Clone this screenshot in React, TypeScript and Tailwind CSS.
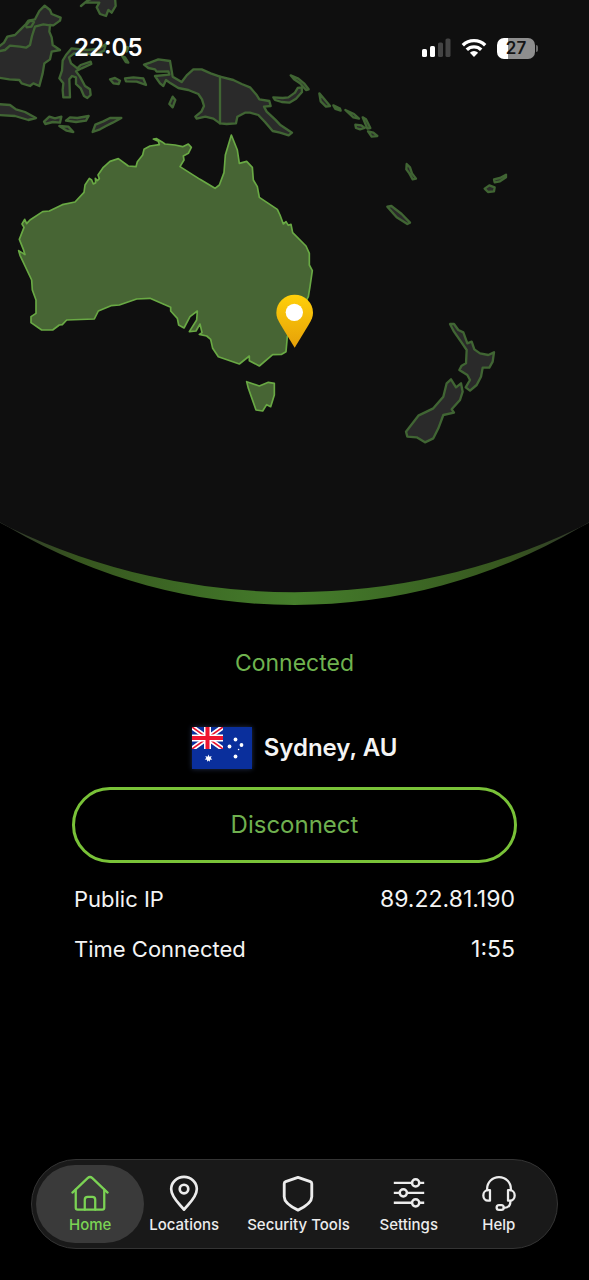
import type { ReactNode } from "react";

function WorldMap() {
    return (
        <svg viewBox="0 0 1767 1860" className="block w-full" aria-hidden="true">
            <defs>
                <linearGradient id="rim" x1="0" x2="1" y1="0" y2="0">
                    <stop offset="0" stopColor="#30352d" />
                    <stop offset="0.13" stopColor="#37551f" />
                    <stop offset="0.32" stopColor="#3d6a25" />
                    <stop offset="0.5" stopColor="#457d2b" />
                    <stop offset="0.68" stopColor="#3d6a25" />
                    <stop offset="0.87" stopColor="#37551f" />
                    <stop offset="1" stopColor="#30352d" />
                </linearGradient>
                <linearGradient id="pin" x1="0" x2="0" y1="0" y2="1">
                    <stop offset="0" stopColor="#ffd00a" />
                    <stop offset="1" stopColor="#e6a008" />
                </linearGradient>
            </defs>

            {/* globe */}
            <path d="M0 0H1767V1568L1737 1584A1692 1692 0 0 1 30 1584L0 1568Z" fill="url(#rim)" />
            <path d="M0 0H1767V1567L1737 1583A1980 1980 0 0 1 30 1583L0 1567Z" fill="#0f0f0f" />

            {/* neighbouring islands */}
            <g fill="#2a2a2a" stroke="#406533" strokeWidth="7" strokeLinejoin="round" strokeLinecap="round">
                {/* Borneo */}
                <path d="M-10 145L12 128L22 110L45 105L62 88L78 72L85 62L105 58L118 33L134 17L150 30L155 42L182 53L180 62L160 76L150 75L148 95L155 112L158 135L180 150L155 155L150 178L133 190L128 220L118 258L100 250L90 258L65 250L58 240L28 238L-10 232Z" />
                <path d="M-10 155L15 150L30 137L60 140L78 143L90 135L96 108L105 80L130 73L150 76M78 76L90 62L102 66L94 80L80 82Z" fill="none" />
                {/* Mindanao */}
                <path d="M243 18L262 2L285 -8L345 -8L347 18L335 38L325 30L318 48L300 42L290 22L298 8L275 8L255 8Z" />
                {/* Sulawesi */}
                <path d="M198 165L215 145L262 150L295 146L318 132L312 152L290 163L222 160L207 172L213 190L232 205L242 195L272 185L274 192L245 205L228 214L240 230L255 258L270 268L272 285L262 294L252 288L242 265L228 252L228 232L216 228L208 238L210 292L190 292L188 270L190 250L178 235L186 212L188 182Z" />
                <path d="M366 168L375 172L385 188L377 186ZM372 140L385 142L380 155Z" />
                {/* Moluccas */}
                <path d="M330 238L345 234L360 242L356 252L340 250ZM375 235L400 232L430 235L438 255L410 245L378 244Z" />
                <path d="M518 290L526 300L518 322L508 312Z" />
                {/* Java and Lesser Sundas */}
                <path d="M-10 312L30 315L48 328L75 336L108 354L85 360L45 348L-10 345Z" />
                <path d="M132 365L148 350L165 355L184 350L180 368L158 366L136 372ZM198 362L210 352L232 354L266 348L258 362L228 366ZM178 378L205 380L220 396L200 392ZM278 396L286 374L310 364L330 354L364 354L338 368L318 378L300 388Z" />
                {/* New Guinea */}
                <path d="M432 194L450 188L475 178L510 183L518 230L545 246L560 226L580 208L605 208L632 220L660 230L700 240L725 252L750 262L770 285L778 298L808 303L812 318L792 320L800 335L825 358L840 374L876 398L866 406L840 398L818 393L795 366L775 345L750 338L735 338L712 350L708 370L680 372L660 370L640 356L616 350L590 356L586 350L604 335L612 318L606 298L595 282L565 270L535 264L512 250L498 240L490 258L480 250L465 228L508 224L505 214L470 215L465 208L445 204Z" />
                <path d="M660 230V370" />
                {/* New Britain */}
                <path d="M820 292L848 294L865 292L885 278L893 264L905 262L906 276L888 296L868 308L845 306L825 300ZM872 226L895 236L912 250L926 268L918 270L900 250L882 238Z" />
                {/* Solomons */}
                <path d="M958 280L972 296L990 318L978 320L962 304ZM1000 316L1020 326L1022 332L1006 327ZM1036 330L1062 342L1077 356L1060 352ZM1088 352L1098 358L1111 384L1102 386ZM1066 374L1084 376L1094 384L1080 388L1068 384ZM1104 394L1120 398L1132 408L1115 410Z" />
                {/* Vanuatu, New Caledonia, Fiji */}
                <path d="M1220 492L1230 502L1236 520L1248 536L1238 538L1228 520L1219 508ZM1162 620L1174 618L1205 642L1230 668L1222 672L1190 652ZM1482 538L1500 534L1518 524L1518 532L1500 544L1484 547ZM1454 566L1468 556L1484 562L1482 574L1464 576Z" />
                {/* New Zealand */}
                <path d="M1350 972L1362 972L1375 990L1390 997L1402 1030L1415 1025L1423 1048L1440 1060L1465 1065L1482 1057L1478 1085L1468 1103L1448 1103L1443 1130L1430 1155L1410 1172L1397 1162L1410 1140L1402 1125L1378 1110L1385 1097L1398 1090L1400 1050L1385 1028L1362 995Z" />
                <path d="M1353 1138L1368 1162L1383 1150L1388 1175L1380 1200L1355 1228L1362 1238L1330 1245L1315 1285L1300 1315L1275 1327L1250 1312L1222 1310L1218 1295L1255 1247L1300 1225L1330 1190L1340 1150Z" />
            </g>

            {/* Australia */}
            <g fill="#476534" stroke="#69a944" strokeWidth="5" strokeLinejoin="round">
                <path d="M225 606L252 577L255 555L268 535L275 540L280 552L287 548L286 535L292 542L298 536L294 525L310 502L330 484L355 476L385 498L408 500L412 485L428 465L432 448L450 438L478 434L475 424L460 417L470 416L485 425L495 432L525 435L548 440L565 432L574 442L565 460L550 468L552 480L540 500L600 538L645 565L658 555L672 518L676 465L694 405L712 450L718 490L740 484L757 502L760 540L772 560L778 592L832 628L840 645L850 672L858 665L865 676L873 673L878 698L918 738L928 760L928 795L937 812L930 860L925 890L862 1010L858 1055L845 1063L818 1064L778 1098L748 1082L748 1068L718 1092L655 1070L638 1045L632 1018L620 1008L598 1003L606 998L600 972L588 993L568 995L590 960L592 933L570 950L552 984L536 975L532 955L512 933L512 922L450 895L410 897L358 915L333 917L295 933L283 957L200 960L187 974L178 975L158 990L125 990L93 968L93 950L108 940L108 900L97 870L95 840L60 766L56 752L75 764L70 748L58 718L72 682L66 672L74 658L80 671L90 660L128 635L148 633L187 614Z" />
                <path d="M740 1145L778 1158L805 1147L823 1150L823 1185L812 1220L800 1214L788 1233L768 1230L745 1165Z" />
            </g>

            {/* location pin */}
            <path d="M884 1043L842 974C833 959 829 950 829 938A55 54 0 0 1 939 938C939 950 935 959 926 974Z" fill="url(#pin)" />
            <circle cx="883" cy="937" r="26" fill="#fff" />
        </svg>
    );
}

function StatusBar() {
    return (
        <header className="absolute inset-x-0 top-0 flex items-center justify-between pt-8 pr-[51px] pl-[74px] text-white">
            <time className="text-2xl leading-8 font-semibold">22:05</time>
            <div className="flex items-center gap-[10px]">
                <svg viewBox="0 0 30 20" className="h-5 w-[30px]" fill="#fff" aria-hidden="true">
                    <rect x="1" y="11" width="5" height="8" rx="1.6" />
                    <rect x="9" y="8" width="5" height="11" rx="1.6" />
                    <rect x="17" y="4.5" width="5" height="14.5" rx="1.6" fill="#444" />
                    <rect x="24.5" y="0.5" width="5" height="18.5" rx="1.6" fill="#444" />
                </svg>
                <svg viewBox="0 0 26 20" className="h-5 w-[26px]" aria-hidden="true">
                    <g fill="none" stroke="#fff" strokeWidth="3.4">
                        <path d="M1.8 7.2A16 16 0 0 1 24.2 7.2" />
                        <path d="M5.8 11.8A10.3 10.3 0 0 1 20.2 11.8" />
                    </g>
                    <path d="M13 19L8.9 14.8A5.8 5.8 0 0 1 17.1 14.8Z" fill="#fff" />
                </svg>
                <div className="flex items-center gap-px">
                    <span className="flex h-[21px] w-[38px] items-center justify-center rounded-[7px] bg-linear-to-r from-white from-28% to-[#8e8e8e] to-28% text-[17px] leading-5 font-semibold text-[#151515]">
                        27
                    </span>
                    <span className="h-[7px] w-[2px] rounded-r-full bg-[#6a6a6a]" />
                </div>
            </div>
        </header>
    );
}

function AustraliaFlag() {
    const stars = [
        [43.5, 12.5, 1.9],
        [37.5, 19.5, 1.9],
        [49.5, 18, 1.9],
        [46.6, 22.5, 0.8],
        [43.5, 29.5, 1.9],
    ];
    return (
        <svg viewBox="0 0 60 42" className="h-[42px] w-[60px] shadow-[0_0_5px_#23304f]" role="img" aria-label="Australia">
            <rect width="60" height="42" fill="#0a2f9c" />
            <svg width="31" height="22" viewBox="0 0 31 22">
                <path d="M0 0L31 22M31 0L0 22" stroke="#fff" strokeWidth="5" />
                <path d="M0 0L31 22M31 0L0 22" stroke="#e8112d" strokeWidth="1.6" />
                <path d="M15.5 0V22M0 11H31" stroke="#fff" strokeWidth="7" />
                <path d="M15.5 0V22M0 11H31" stroke="#f0142f" strokeWidth="4" />
            </svg>
            {stars.map(([cx, cy, r]) => (
                <circle key={`${cx}-${cy}`} cx={cx} cy={cy} r={r} fill="#fff" />
            ))}
            <path
                d="M16.5 27.5L17.4 29.7L19.7 29.1L18.7 31.1L20.3 32.5L18 32.8L17.8 34.8L16.5 33.4L15.2 34.8L15 32.8L12.7 32.5L14.3 31.1L13.3 29.1L15.6 29.7Z"
                fill="#fff"
            />
        </svg>
    );
}

const tabs: { label: string; icon: ReactNode }[] = [
    {
        label: "Home",
        icon: (
            <>
                <path d="M1.5 18.5L17.5 3.3Q20 1 22.500 3.3L38.5 18.5" />
                <path d="M5 15.5V34.5Q5 36.5 7 36.5H33Q35 36.5 35 34.5V15.5" />
                <path d="M14.5 36.5V26Q14.5 23 17.5 23H22.5Q25.5 23 25.5 26V36.5" />
            </>
        ),
    },
    {
        label: "Locations",
        icon: (
            <g strokeWidth="2.8">
                <path d="M20 36.500C16 31 6.500 24 6.500 14.800A13.500 12.800 0 0 1 33.500 14.800C33.500 24 24 31 20 36.500Z" />
                <circle cx="20" cy="14.8" r="4.5" />
            </g>
        ),
    },
    {
        label: "Security Tools",
        icon: (
            <path
                strokeWidth="3"
                d="M20 2.5L33 7Q34.500 7.600 34.500 9.200V23C34.500 29.500 27.500 33.500 20 37C12.500 33.500 5.500 29.500 5.500 23V9.200Q5.500 7.600 7 7Z"
            />
        ),
    },
    {
        label: "Settings",
        icon: (
            <g strokeWidth="2.6">
                <path d="M4 8.3H23M31 8.3H36M4 18.8H10M18 18.8H36M4 29.3H23M31 29.3H36" strokeLinecap="butt" />
                <circle cx="27" cy="8.3" r="3.8" />
                <circle cx="14" cy="18.8" r="3.8" />
                <circle cx="27" cy="29.3" r="3.8" />
            </g>
        ),
    },
    {
        label: "Help",
        icon: (
            <>
                <path d="M7.5 16V14.5A12.5 12.3 0 0 1 32.5 14.5V16" />
                <path d="M10.5 16V27H8.5A5 5.5 0 0 1 8.5 16ZM29.5 16V27H31.5A5 5.5 0 0 0 31.5 16Z" />
                <path d="M32 27.5C32 32 29.5 34.5 25 34.5" />
                <rect x="17.5" y="31.8" width="7.5" height="5" rx="2.5" />
            </>
        ),
    },
];

function TabBar() {
    return (
        <nav className="mx-[31px] mt-auto mb-[31px] flex h-[90px] items-center justify-center rounded-full border border-[#343434] bg-[#191919]">
            {tabs.map(({ label, icon }, i) => (
                <a
                    key={label}
                    href="#"
                    aria-current={i === 0 ? "page" : undefined}
                    className="relative flex h-[78px] min-w-[90px] flex-col items-center px-3.5 pt-2.5 text-[#ececec] aria-[current]:text-[#7bd354]"
                >
                    {i === 0 && <span className="absolute inset-y-0 -inset-x-[9px] rounded-full bg-[#3a3a3a]" />}
                    <svg
                        viewBox="0 0 40 40"
                        className="relative size-[38px]"
                        fill="none"
                        stroke="currentColor"
                        strokeWidth="2.4"
                        strokeLinecap="round"
                        strokeLinejoin="round"
                        aria-hidden="true"
                    >
                        {icon}
                    </svg>
                    <span className="relative text-[15px] leading-6 font-medium whitespace-nowrap">{label}</span>
                </a>
            ))}
        </nav>
    );
}

export default function App() {
    return (
        <div className="relative flex min-h-screen flex-col bg-black font-['Inter','Liberation_Sans',sans-serif]">
            <WorldMap />
            <StatusBar />

            <main className="flex flex-col px-[72px] pt-[27px]">
                <p className="text-center text-[23px] leading-8 text-[#6fb34f]">Connected</p>

                <div className="mt-12 flex items-center justify-center gap-3">
                    <AustraliaFlag />
                    <h1 className="text-2xl leading-8 font-semibold text-[#f4f4f4]">Sydney, AU</h1>
                </div>

                <button
                    type="button"
                    className="mt-[18px] h-[76px] rounded-full border-3 border-[#79c238] text-2xl text-[#6fb04f]"
                >
                    Disconnect
                </button>

                <dl className="mt-5 flex flex-col gap-[18px] px-[2px] text-[23px] leading-8 text-[#f4f4f4]">
                    <div className="flex justify-between">
                        <dt className="text-[22px]">Public IP</dt>
                        <dd>89.22.81.190</dd>
                    </div>
                    <div className="flex justify-between">
                        <dt className="text-[22px]">Time Connected</dt>
                        <dd>1:55</dd>
                    </div>
                </dl>
            </main>

            <TabBar />
        </div>
    );
}
